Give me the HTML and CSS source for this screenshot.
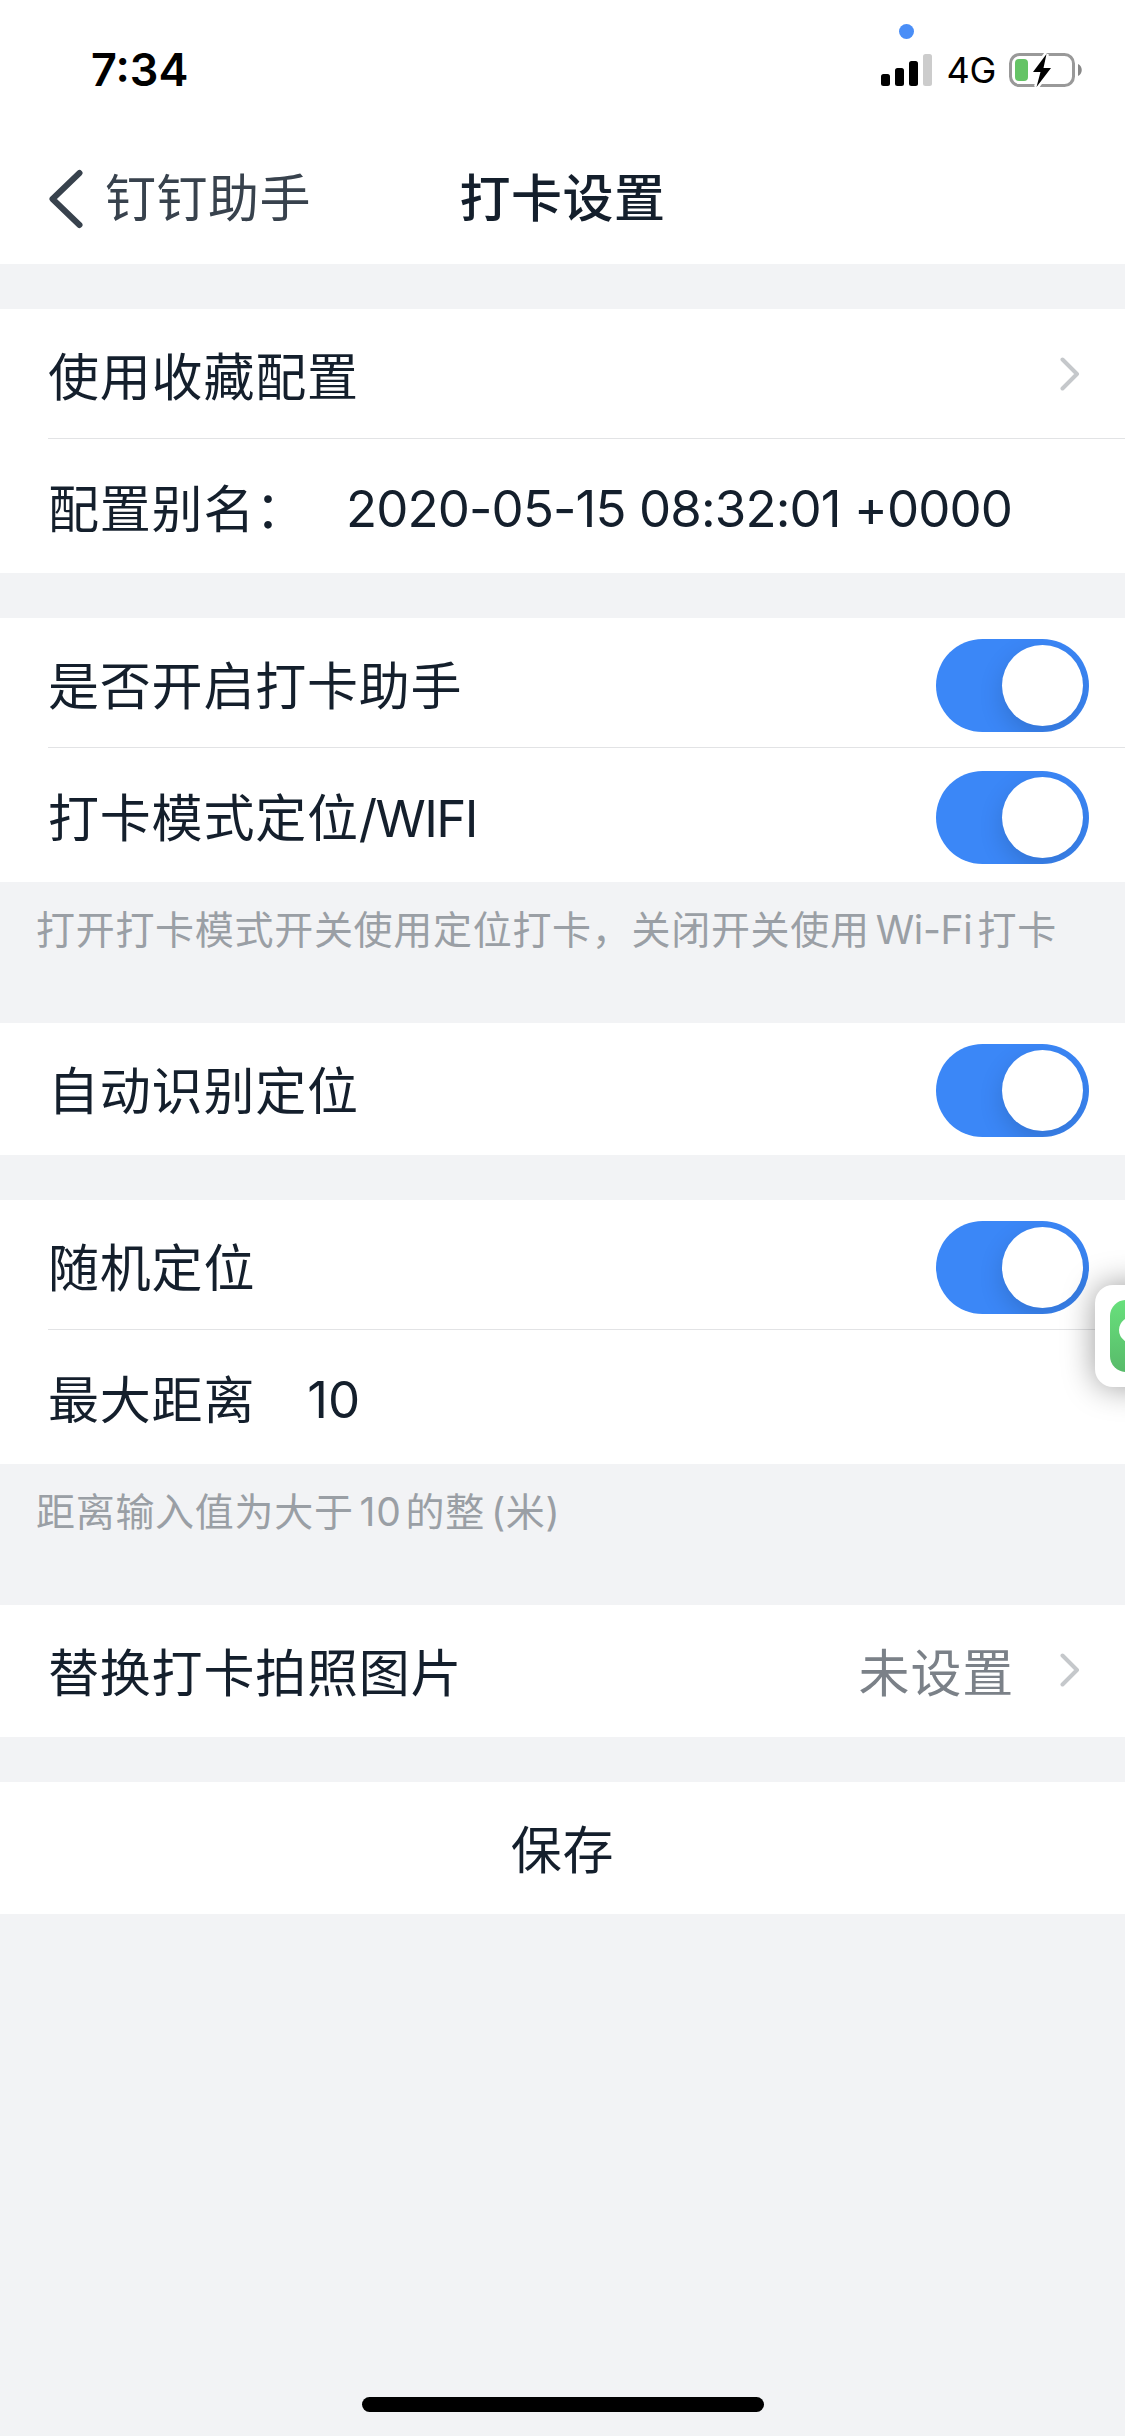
FILE: index.html
```html
<!DOCTYPE html>
<html lang="zh-CN">
<head>
<meta charset="utf-8">
<title>打卡设置</title>
<link rel="stylesheet" href="styles.css">
</head>
<body>
<div class="screen">
  <header class="top">
    <div class="status">
      <span class="time">7:34</span>
      <div class="status-right">
        <svg class="signal" width="51" height="32" viewBox="0 0 51 32">
          <rect x="0" y="20" width="9" height="12" rx="2.5"/>
          <rect x="14" y="14" width="9" height="18" rx="2.5"/>
          <rect x="28" y="7" width="9" height="25" rx="2.5"/>
          <rect x="42" y="0" width="9" height="32" rx="2.5" fill="#ccc"/>
        </svg>
        <span class="network">4G</span>
        <svg class="battery" width="74" height="36" viewBox="0 0 74 36">
          <rect x="1.5" y="2.5" width="63" height="31" rx="9" fill="none" stroke="#999" stroke-width="3"/>
          <path d="M69 12c5 2 5 10 0 12z" fill="#888"/>
          <rect x="6" y="7" width="13" height="22" rx="4" fill="#65c466"/>
          <path d="M37.500 2L24 20h7.500L27.500 35 42 16h-7.500z" fill="#000" stroke="#fff" stroke-width="5" paint-order="stroke"/>
        </svg>
        <span class="location-dot"></span>
      </div>
    </div>
    <nav class="nav">
      <a class="back">
        <svg width="36" height="60" viewBox="0 0 36 60"><path d="M31.500 4L4.500 30l27 26" fill="none" stroke="#38424d" stroke-width="6" stroke-linecap="round" stroke-linejoin="round"/></svg>
        <span>钉钉助手</span>
      </a>
      <h1 class="title">打卡设置</h1>
    </nav>
  </header>

  <main class="list">
    <section class="group">
      <div class="row divided"><span class="label">使用收藏配置</span><svg class="chevron" width="20" height="34" viewBox="0 0 20 34"><path d="M2.500 2.500L17 17 2.500 31.500"/></svg></div>
      <div class="row"><span class="label alias">配置别名：</span><span class="date">2020-05-15 08:32:01 +0000</span></div>
    </section>
    <section class="group">
      <div class="row divided"><span class="label">是否开启打卡助手</span><span class="toggle"></span></div>
      <div class="row"><span class="label">打卡模式定位<span class="wifi">/WIFI</span></span><span class="toggle"></span></div>
    </section>
    <p class="hint">打开打卡模式开关使用定位打卡，关闭开关使用<span class="latin network-word">Wi-Fi</span>打卡</p>
    <section class="group">
      <div class="row"><span class="label">自动识别定位</span><span class="toggle"></span></div>
    </section>
    <section class="group">
      <div class="row divided"><span class="label">随机定位</span><span class="toggle"></span></div>
      <div class="row"><span class="label">最大距离</span><span class="distance">10</span></div>
    </section>
    <p class="hint">距离输入值为大于<span class="latin number">10</span>的整<span class="latin">(</span>米<span>)</span></p>
    <section class="group">
      <div class="row"><span class="label">替换打卡拍照图片</span><span class="value">未设置</span><svg class="chevron" width="20" height="34" viewBox="0 0 20 34"><path d="M2.500 2.500L17 17 2.500 31.500"/></svg></div>
    </section>
    <section class="group">
      <div class="row save"><span class="label">保存</span></div>
    </section>
  </main>

  <div class="floating">
    <svg width="72" height="72" viewBox="0 0 72 72">
      <defs><linearGradient id="leaf" x1="0" y1="0" x2="0" y2="1"><stop offset="0" stop-color="#68e07c"/><stop offset="1" stop-color="#58bb6a"/></linearGradient></defs>
      <rect width="72" height="72" rx="16" fill="url(#leaf)"/>
      <ellipse cx="26" cy="30" rx="17" ry="14.500" fill="#fff"/>
    </svg>
  </div>
  <div class="home-indicator"></div>
</div>
</body>
</html>
```
FILE: styles.css
```css
* { box-sizing: border-box; }

body {
  margin: 0;
  background: #f2f3f5;
  color: #141f2c;
  font-family: Inter, "Noto Sans CJK SC", sans-serif;
  font-size: 51px;
}

.screen {
  position: relative;
  width: 1125px;
  height: 2436px;
  overflow: hidden;
}

.top { height: 264px; background: #fff; }

.status {
  display: flex;
  justify-content: space-between;
  align-items: center;
  height: 132px;
  padding: 7px 42px 0 91px;
  color: #000;
}

.time { font-size: 45px; font-weight: 600; line-height: 60px; }

.status-right {
  position: relative;
  display: flex;
  align-items: center;
}

.network {
  margin: 0 13px 0 14px;
  font-size: 36px;
  line-height: 40px;
  letter-spacing: -0.3px;
}

.location-dot {
  position: absolute;
  left: 18px;
  top: -26px;
  width: 15px;
  height: 15px;
  border-radius: 50%;
  background: #4a8ef7;
}

.nav {
  display: grid;
  grid-template-columns: 1fr auto 1fr;
  align-items: center;
  height: 132px;
  padding: 2px 48px 0;
  line-height: 72px;
}

.back {
  display: flex;
  align-items: center;
  gap: 21px;
  color: #38424d;
  letter-spacing: 0.5px;
}

.title {
  margin: 0;
  font-size: 51px;
  font-weight: 500;
  letter-spacing: 0.5px;
}

.list {
  display: flex;
  flex-direction: column;
  gap: 45px;
  padding-top: 45px;
}

.group { background: #fff; }

.row {
  display: flex;
  align-items: center;
  height: 132px;
  padding: 3px 36px 0 48px;
  line-height: 72px;
}

.divided {
  background: linear-gradient(#e2e3e5, #e2e3e5) 48px 129px / 100% 1px no-repeat;
}

.label { padding-top: 2px; letter-spacing: 0.8px; white-space: nowrap; }
.alias { width: 298px; }
.wifi { letter-spacing: -1.6px; }
.date { letter-spacing: -0.88px; white-space: nowrap; }
.distance { margin-left: 52px; }
.value { margin-left: auto; padding-top: 2px; color: #7b8188; letter-spacing: 0.8px; }
.save { justify-content: center; padding: 3px 0 0; }

.chevron {
  margin: 0 9px 6px auto;
  fill: none;
  stroke: #c5c8cb;
  stroke-width: 4;
  stroke-linecap: round;
  stroke-linejoin: round;
}

.value + .chevron { margin-left: 46px; }

.toggle {
  width: 153px;
  height: 93px;
  margin-left: auto;
  padding: 6px;
  border-radius: 47px;
  background: #3b87f7;
  overflow: hidden;
}

.toggle::before {
  content: "";
  display: block;
  width: 81px;
  height: 81px;
  margin-left: auto;
  border-radius: 50%;
  background: #fff;
  box-shadow: 0 9px 24px rgba(0, 0, 0, 0.15);
}

.hint {
  height: 51px;
  margin: -24px 0 24px;
  padding: 0 36px;
  color: #9a9fa5;
  font-size: 39px;
  line-height: 54px;
  letter-spacing: 0.7px;
  white-space: nowrap;
}

.latin { margin-left: 6px; }
.network-word { margin-right: 5px; letter-spacing: -0.3px; }
.number { margin-right: 4px; }

.floating {
  position: absolute;
  left: 1095px;
  top: 1285px;
  width: 102px;
  height: 102px;
  padding: 15px;
  border-radius: 18px;
  background: #fff;
  box-shadow: 0 0 32px rgba(0, 0, 0, 0.4);
}

.floating svg { display: block; }

.home-indicator {
  position: absolute;
  left: 362px;
  top: 2397px;
  width: 402px;
  height: 15px;
  border-radius: 8px;
  background: #000;
}
```
